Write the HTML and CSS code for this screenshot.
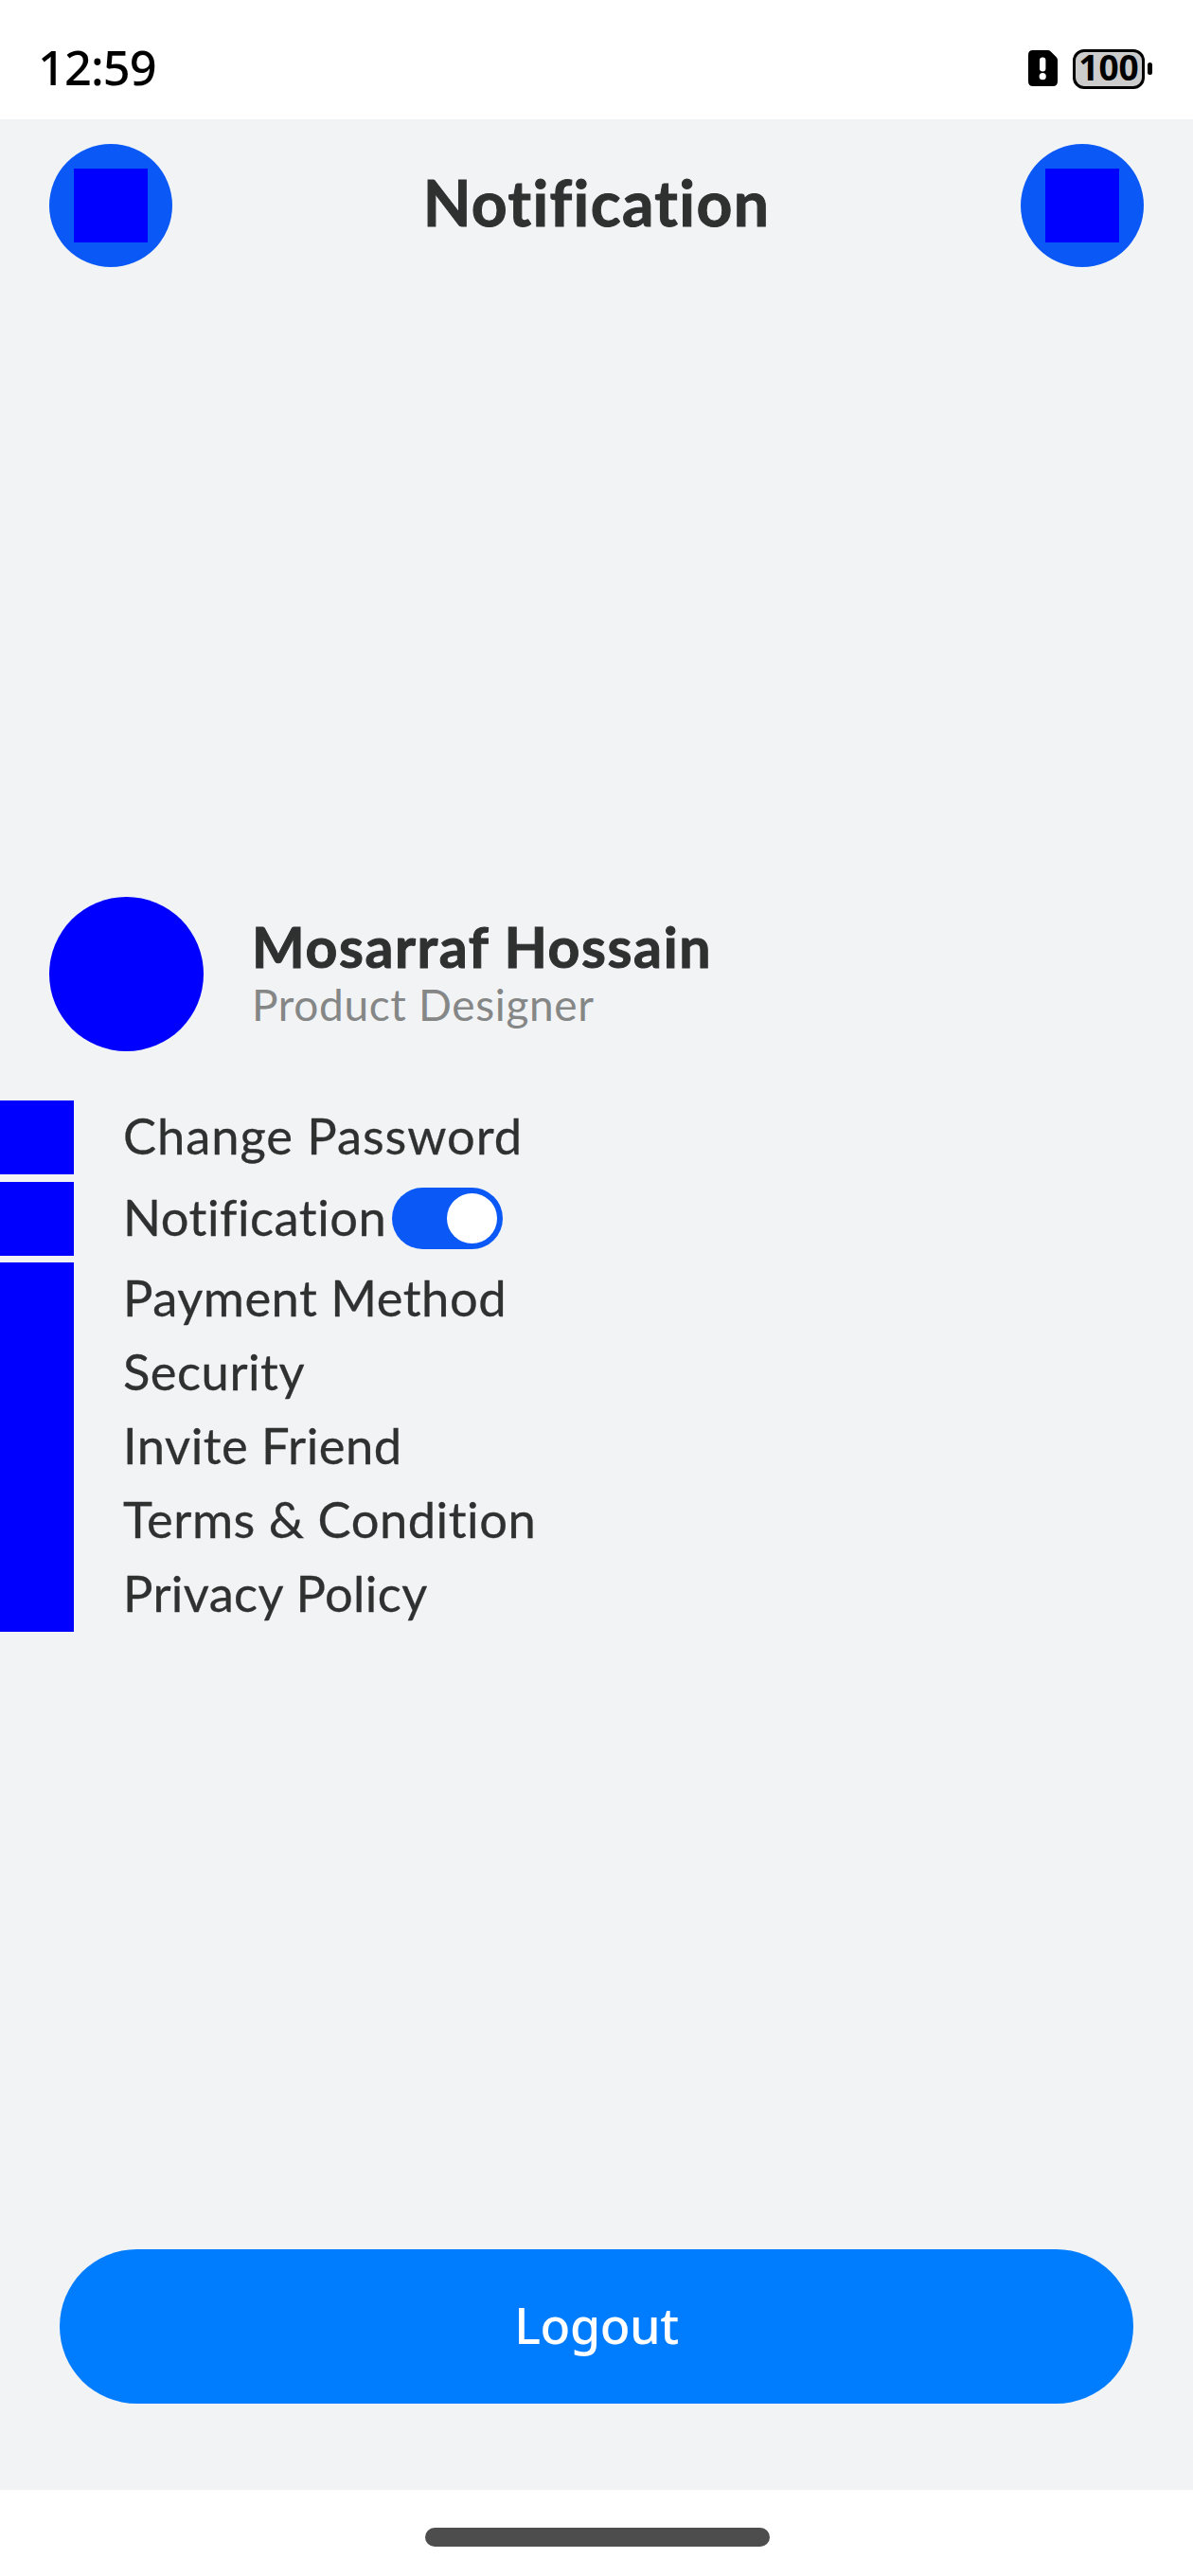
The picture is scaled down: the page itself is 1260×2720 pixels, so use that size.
FILE: index.html
```html
<!DOCTYPE html>
<html lang="en">
<head>
<meta charset="utf-8">
<title>Notification</title>
<link rel="stylesheet" href="styles.css">
</head>
<body>
<header class="status-bar">
  <span class="clock">12:59</span>
  <div class="status-icons">
    <svg class="sim" viewBox="0 0 31 38" aria-hidden="true">
      <path d="M5 0H20.500Q22.300 0 23.600 1.300L29.600 7.300Q31 8.700 31 10.500V33Q31 38 26 38H5Q0 38 0 33V5Q0 0 5 0Z"/>
      <rect class="sim-mark" x="12" y="7.500" width="6.400" height="15" rx="3.200"/>
      <circle class="sim-mark" cx="15.200" cy="27.700" r="3.600"/>
    </svg>
    <div class="battery">100</div>
    <span class="battery-tip"></span>
  </div>
</header>
<main class="page">
  <nav class="top-bar">
    <button class="round-button" aria-label="Back"><span class="glyph"></span></button>
    <h1 class="title">Notification</h1>
    <button class="round-button" aria-label="More"><span class="glyph"></span></button>
  </nav>
  <section class="content">
    <div class="profile">
      <div class="avatar"></div>
      <div class="profile-text">
        <h2 class="name">Mosarraf Hossain</h2>
        <p class="role">Product Designer</p>
      </div>
    </div>
    <ul class="menu">
      <li class="item"><span class="glyph"></span><span class="label change">Change Password</span></li>
      <li class="item with-switch"><span class="glyph"></span><span class="label">Notification</span><span class="switch"><span class="knob"></span></span></li>
      <li class="item"><span class="glyph"></span><span class="label">Payment Method</span></li>
      <li class="item"><span class="glyph"></span><span class="label">Security</span></li>
      <li class="item"><span class="glyph"></span><span class="label">Invite Friend</span></li>
      <li class="item"><span class="glyph"></span><span class="label">Terms &amp; Condition</span></li>
      <li class="item"><span class="glyph"></span><span class="label privacy">Privacy Policy</span></li>
    </ul>
  </section>
  <button class="logout">Logout</button>
</main>
<footer class="home-area"><span class="home-bar"></span></footer>
</body>
</html>
```
FILE: styles.css
```css
* { box-sizing: border-box; margin: 0; padding: 0; }

body {
  width: 1260px;
  height: 2720px;
  display: flex;
  flex-direction: column;
  overflow: hidden;
  background: #fff;
  color: #2e3130;
  font-family: Lato, "Noto Sans", sans-serif;
}

button { border: 0; font: inherit; }

.status-bar {
  height: 126px;
  padding: 0 43px 0 40px;
  display: flex;
  justify-content: space-between;
  color: #000;
  font-family: "Noto Sans", sans-serif;
}

.clock {
  padding-top: 36px;
  font-size: 50.500px;
  font-weight: 500;
  line-height: 69px;
  letter-spacing: -0.900px;
}

.status-icons {
  display: flex;
  align-items: flex-start;
  padding-top: 52px;
}

.sim { width: 31px; height: 38px; margin: 1px 16px 0 0; }
.sim-mark { fill: #fff; }

.battery {
  width: 76px;
  height: 42px;
  border: 3px solid #000;
  border-radius: 12px;
  background: #ccc;
  font-size: 37px;
  font-weight: 700;
  line-height: 32px;
  text-align: center;
}

.battery-tip {
  width: 5px;
  height: 13px;
  margin: 14px 0 0 3px;
  border-radius: 3px;
  background: #000;
}

.page {
  height: 2503px;
  display: flex;
  flex-direction: column;
  background: #f1f3f5;
}

.top-bar {
  height: 182px;
  padding: 0 52px;
  display: flex;
  align-items: center;
  justify-content: space-between;
}

.round-button {
  width: 130px;
  height: 130px;
  display: grid;
  place-items: center;
  border-radius: 50%;
  background: #0a59f7;
}

.glyph { flex: none; width: 78px; height: 78px; background: #00f; }

.title {
  padding-bottom: 6px;
  font-size: 66px;
  font-weight: 700;
  line-height: 80px;
  letter-spacing: 1.380px;
  -webkit-text-stroke: 1px currentColor;
}

.content {
  flex: 1;
  display: flex;
  flex-direction: column;
  padding-top: 639px;
}

.profile {
  display: flex;
  align-items: center;
  gap: 51px;
  padding-left: 52px;
  margin-bottom: 52px;
}

.avatar { width: 163px; height: 163px; border-radius: 50%; background: #00f; }

.profile-text { display: flex; flex-direction: column; gap: 4px; padding-top: 1px; }

.name {
  font-size: 59px;
  font-weight: 700;
  line-height: 60px;
  letter-spacing: 1.600px;
  -webkit-text-stroke: 1px currentColor;
}

.role {
  color: #858686;
  font-size: 46px;
  line-height: 54px;
  letter-spacing: 0.650px;
}

.menu { list-style: none; }

.item { height: 78px; display: flex; align-items: center; }
.item.with-switch { height: 93px; }

.label {
  padding: 0 0 4px 52px;
  font-size: 52.500px;
  line-height: 64px;
  letter-spacing: 0.500px;
  -webkit-text-stroke: 0.300px currentColor;
}
.label.change { letter-spacing: 0.930px; }
.label.privacy { letter-spacing: 0.350px; }

.switch {
  width: 117px;
  height: 65px;
  margin-left: 6px;
  padding: 6px;
  display: flex;
  justify-content: flex-end;
  border-radius: 33px;
  background: #0a59f7;
}

.knob { width: 53px; height: 53px; border-radius: 50%; background: #fff; }

.logout {
  height: 163px;
  margin: 0 63px 91px;
  padding-bottom: 5px;
  border-radius: 82px;
  background: #007dff;
  color: #fff;
  font-family: "Noto Sans", sans-serif;
  font-size: 52px;
  font-weight: 500;
  letter-spacing: -0.400px;
}

.home-area { height: 91px; display: flex; justify-content: center; padding: 39.500px 0 0 1px; }
.home-bar { width: 364px; height: 20px; border-radius: 10px; background: #4d4d4d; }
```
